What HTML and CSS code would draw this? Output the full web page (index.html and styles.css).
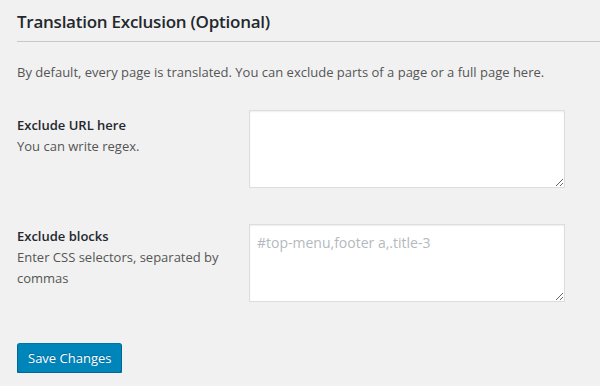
FILE: index.html
```html
<!DOCTYPE html>
<html lang="en">
<head>
  <meta charset="UTF-8">
  <title>Translation Exclusion</title>
  <link rel="stylesheet" href="styles.css">
</head>
<body>
  <div class="wrap">
    <h2 class="section-title">Translation Exclusion (Optional)</h2>
    <p class="intro">By default, every page is translated. You can exclude parts of a page or a full page here.</p>
    <form class="settings-form">
      <div class="field-row">
        <div class="field-label">
          <div class="label-title">Exclude URL here</div>
          <div class="label-desc">You can write regex.</div>
        </div>
        <textarea class="field-input"></textarea>
      </div>
      <div class="field-row">
        <div class="field-label">
          <div class="label-title">Exclude blocks</div>
          <div class="label-desc">Enter CSS selectors, separated by commas</div>
        </div>
        <textarea class="field-input" placeholder="#top-menu,footer a,.title-3"></textarea>
      </div>
      <div class="submit-row">
        <button type="button" class="save-btn">Save Changes</button>
      </div>
    </form>
  </div>
</body>
</html>
```

FILE: styles.css
```css
html, body {
  margin: 0;
  padding: 0;
  background: #f1f1f1;
  font-family: 'Open Sans', 'Noto Sans', Arial, sans-serif;
  font-size: 13px;
  color: #444;
}
.wrap {
  padding: 0 0 0 17px;
}
.section-title {
  margin: 0;
  padding: 11px 0 8px 0;
  font-size: 17px;
  font-weight: 600;
  letter-spacing: -0.25px;
  line-height: 22px;
  color: #23282d;
  border-bottom: 1px solid #c8c8c8;
}
.intro {
  margin: 20px 0 0 0;
  line-height: 20px;
  color: #555;
}
.settings-form {
  margin-top: 28px;
}
.field-row {
  display: flex;
  align-items: flex-start;
  margin-bottom: 36px;
}
.field-row:first-child .field-label {
  padding-top: 4px;
}
.field-label {
  width: 232px;
  flex: none;
  padding-top: 1px;
}
.label-title {
  font-weight: 600;
  color: #23282d;
  line-height: 22px;
}
.label-desc {
  line-height: 21px;
  color: #555;
  padding-right: 20px;
}
.field-input {
  width: 316px;
  height: 78px;
  box-sizing: border-box;
  margin: 0;
  padding: 8px 7px;
  border: 1px solid #ddd;
  box-shadow: inset 0 1px 2px rgba(0,0,0,0.07);
  background: #fff;
  font-family: inherit;
  font-size: 14px;
  line-height: 20px;
  color: #32373c;
  outline: none;
}
.field-input::placeholder {
  color: #b4b9be;
}
.submit-row {
  margin-top: 41px;
}
.save-btn {
  background: #0085ba;
  border: 1px solid #0073aa;
  border-color: #0073aa #006799 #006799;
  border-radius: 3px;
  box-shadow: 0 1px 0 #006799;
  color: #fff;
  font-family: inherit;
  font-size: 13px;
  height: 30px;
  line-height: 28px;
  padding: 0 10px 1px;
  cursor: pointer;
  text-shadow: 0 -1px 1px #006799;
}
```
